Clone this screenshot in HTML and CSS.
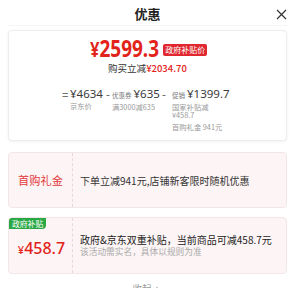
FILE: index.html
```html
<!DOCTYPE html>
<html lang="zh">
<head>
<meta charset="utf-8">
<link rel="stylesheet" href="styles.css">
</head>
<body>
<div class="sheet">
  <header class="head">
    <h1 class="title">优惠</h1>
    <span class="close">
      <svg width="11" height="11" viewBox="0 0 11 11"><path d="M1 1L10 10M10 1L1 10" stroke="#333" stroke-width="1.2" fill="none"/></svg>
    </span>
  </header>

  <section class="card summary">
    <div class="price-line">
      <span class="big-price"><span class="yen">¥</span>2599.3</span>
      <span class="tag-red">政府补贴价</span>
    </div>
    <div class="save-line">购买立减<span class="save-amt">¥2034.70</span></div>
    <div class="calc">
      <span class="op op1">=</span>
      <div class="col col1">
        <div class="amt">¥4634</div>
        <div class="sub">京东价</div>
      </div>
      <span class="op op2">-</span>
      <div class="col col2">
        <div class="amt"><span class="lbl">优惠券</span>¥635</div>
        <div class="sub">满3000减635</div>
      </div>
      <span class="op op3">-</span>
      <div class="col col3">
        <div class="amt"><span class="lbl">促销</span>¥1399.7</div>
        <div class="sub">国家补贴减</div>
        <div class="sub">¥458.7</div>
        <div class="sub gap">首购礼金 941元</div>
      </div>
    </div>
  </section>

  <section class="card coupon">
    <div class="left">
      <span class="gift">首购礼金</span>
    </div>
    <div class="right">
      <div class="main-text">下单立减941元,店铺新客限时随机优惠</div>
    </div>
  </section>

  <section class="card coupon tall">
    <span class="tag-green">政府补贴</span>
    <div class="left">
      <span class="sub-price"><span class="yen-s">¥</span>458.7</span>
    </div>
    <div class="right">
      <div class="main-text dark">政府&amp;京东双重补贴，当前商品可减458.7元</div>
      <div class="note">该活动需实名，具体以规则为准</div>
    </div>
  </section>

  <div class="fold">收起 <span class="caret">∧</span></div>
</div>
</body>
</html>
```
FILE: styles.css
```css
* { box-sizing: border-box; margin: 0; padding: 0; }
html, body { background: #fff; }
body {
  width: 297px;
  height: 288px;
  overflow: hidden;
  font-family: "Noto Sans CJK SC", "Noto Sans", sans-serif;
  color: #333;
}
.sheet { padding: 0 10px 0 8px; }
.head {
  position: relative;
  height: 26px;
  display: flex;
  align-items: center;
  justify-content: center;
  border-bottom: 1px solid #f4f4f4;
  margin-bottom: 4px;
}
.title { font-size: 13px; font-weight: 700; color: #222; line-height: 1; margin-top: 2px; }
.close { position: absolute; right: 0; top: 9px; display: flex; }

.card { border-radius: 4px; }
.summary {
  height: 111px;
  background: #fff;
  border: 1px solid #ededed;
  box-shadow: 0 1px 3px rgba(0,0,0,0.06);
  padding-top: 5px;
  display: flex;
  flex-direction: column;
}
.price-line {
  display: flex;
  align-items: center;
  justify-content: center;
  height: 24px;
  padding-left: 2px;
}
.big-price {
  display: inline-block;
  font-family: "Noto Sans", sans-serif;
  font-size: 24px;
  font-weight: 700;
  line-height: 24px;
  color: #e2231a;
  transform: scaleX(0.79);
  transform-origin: left center;
  margin-right: -18px;
  white-space: nowrap;
}
.big-price .yen { font-size: 21px; }
.tag-red {
  background: #e0262f;
  color: #fff;
  font-size: 8px;
  line-height: 12px;
  padding: 0 2px;
  border-radius: 2px;
  margin-left: 4px;
  margin-top: 3px;
}
.save-line { font-size: 9.5px; color: #333; margin-top: 2px; line-height: 12px; text-align: center; }
.save-amt { color: #e2231a; font-weight: 500; }

.calc { display: flex; margin-top: 13px; padding-left: 53px; }
.op { font-size: 11.5px; line-height: 14px; color: #555; flex: none; }
.op1 { width: 8px; }
.op2 { width: 6px; }
.op3 { width: 10px; }
.col { display: flex; flex-direction: column; flex: none; }
.col1 { width: 36px; }
.col2 { width: 50px; }
.amt {
  font-family: "Noto Sans", sans-serif;
  font-size: 11.5px;
  color: #3a3a3a;
  line-height: 14px;
  white-space: nowrap;
  display: flex;
  align-items: baseline;
}
.lbl { font-family: "Noto Sans CJK SC", sans-serif; font-size: 6.5px; color: #777; margin-right: 2px; }
.col3 .lbl { margin-right: 2px; }
.sub { font-size: 7.3px; color: #999; line-height: 8px; white-space: nowrap; }
.col .sub:nth-child(2) { margin-top: 1px; }
.gap { margin-top: 4px; }

.coupon {
  margin-top: 11px;
  height: 56px;
  background: #fdf5f5;
  border: 1px solid #f3e6e6;
  display: flex;
  position: relative;
}
.coupon.tall { margin-top: 9px; height: 57px; }
.left {
  width: 64px;
  flex: none;
  border-right: 1px dashed #e8d8d8;
  display: flex;
  align-items: center;
  justify-content: center;
}
.gift { font-size: 11.2px; color: #e4393c; }
.right {
  padding-left: 7px;
  display: flex;
  flex-direction: column;
  justify-content: center;
}
.main-text { font-size: 10px; color: #333; line-height: 13px; white-space: nowrap; }
.main-text.dark { color: #222; }
.note { font-size: 8.7px; color: #aaa; line-height: 12px; }

.tag-green {
  position: absolute;
  left: 0;
  top: 0;
  background: #2aa846;
  color: #fff;
  font-size: 7.8px;
  line-height: 11px;
  padding: 0 3px;
  border-radius: 3px 0 4px 0;
}
.sub-price {
  font-family: "Noto Sans", sans-serif;
  font-size: 16px;
  font-weight: 500;
  color: #e2231a;
  margin-top: 4px;
  margin-left: 2px;
}
.yen-s { font-size: 11px; }

.fold { text-align: center; font-size: 9.5px; color: #999; margin-top: 8px; line-height: 12px; padding-right: 2px; }
.caret { font-size: 7px; }
```
